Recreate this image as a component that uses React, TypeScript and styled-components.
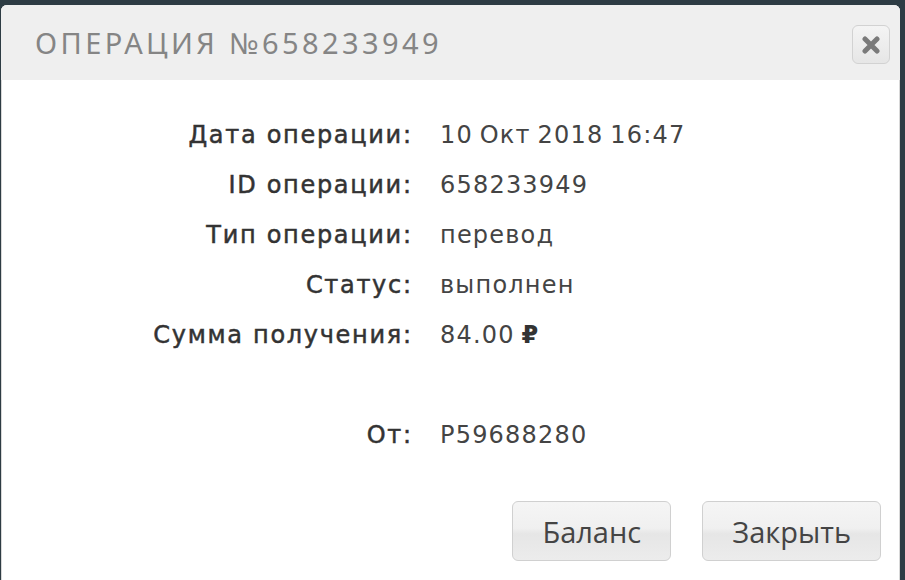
import React from "react";
import styled, { createGlobalStyle } from "styled-components";

const Global = createGlobalStyle`
  html, body { margin: 0; padding: 0; background: #2e3c44; overflow: hidden; }
  body { width: 905px; height: 580px; }
`;

const Dialog = styled.div`
  margin: 5px 0 0 1px;
  width: 899px;
  height: 600px;
  background: #fff;
  border-radius: 6px 6px 0 0;
  box-shadow: inset 0 0 0 1px #d8d8d8;
  display: flex;
  flex-direction: column;
  overflow: hidden;
`;

const Header = styled.div`
  height: 75px;
  background: #efefef;
  display: flex;
  align-items: center;
  justify-content: space-between;
  padding: 0 10px 0 34px;
  box-sizing: border-box;
`;

const Title = styled.h1`
  margin: 0;
  font-family: "Noto Sans", sans-serif;
  font-weight: 400;
  font-size: 29px;
  letter-spacing: 3.4px;
  color: #858585;
  text-transform: uppercase;
`;

const CloseButton = styled.button`
  width: 38px;
  height: 39px;
  margin-top: 4px;
  border: 1px solid #d2d2d2;
  border-radius: 6px;
  background: linear-gradient(#f4f4f4, #e6e6e6);
  display: flex;
  align-items: center;
  justify-content: center;
  padding: 0;
`;

const Body = styled.div`
  padding: 30px 0 0;
  display: grid;
  grid-template-columns: 410px 1fr;
  column-gap: 29px;
  grid-auto-rows: 50px;
  align-items: center;
`;

const Label = styled.div`
  text-align: right;
  margin-right: -1.7px;
  font-family: "DejaVu Sans", sans-serif;
  font-weight: 400;
  font-size: 24px;
  letter-spacing: 1.7px;
  color: #333;
  -webkit-text-stroke: 0.5px #333;
`;

const Value = styled.div`
  font-family: "DejaVu Sans", sans-serif;
  font-weight: 400;
  font-size: 24px;
  letter-spacing: 1.2px;
  word-spacing: -2px;
  color: #444;
`;

const Currency = styled.span`
  font-weight: 700;
  color: #333;
`;

const Spacer = styled.div`
  grid-column: 1 / span 2;
`;

const Footer = styled.div`
  display: flex;
  justify-content: flex-end;
  gap: 31px;
  padding: 41px 19px 0 0;
`;

const Button = styled.button`
  height: 60px;
  padding: 0 29px;
  border: 1px solid #d0d0d0;
  border-radius: 6px;
  background: linear-gradient(#f5f5f5, #f0f0f0 45%, #e6e6e6 55%, #ececec);
  font-family: "Open Sans", sans-serif;
  font-size: 29px;
  color: #444;
`;

const rows: [string, React.ReactNode][] = [
  ["Дата операции:", "10 Окт 2018 16:47"],
  ["ID операции:", "658233949"],
  ["Тип операции:", "перевод"],
  ["Статус:", "выполнен"],
  ["Сумма получения:", <>84.00 <Currency>₽</Currency></>],
];

export default function App() {
  return (
    <>
      <Global />
      <Dialog>
        <Header>
          <Title>Операция №658233949</Title>
          <CloseButton aria-label="close">
            <svg width="18" height="18" viewBox="0 0 18 18">
              <path d="M3 3 L15 15 M15 3 L3 15" stroke="#7a7a7a" strokeWidth="5" strokeLinecap="round" />
            </svg>
          </CloseButton>
        </Header>
        <Body>
          {rows.map(([l, v]) => (
            <React.Fragment key={l}>
              <Label>{l}</Label>
              <Value>{v}</Value>
            </React.Fragment>
          ))}
          <Spacer />
          <Label>От:</Label>
          <Value>P59688280</Value>
        </Body>
        <Footer>
          <Button>Баланс</Button>
          <Button>Закрыть</Button>
        </Footer>
      </Dialog>
    </>
  );
}
